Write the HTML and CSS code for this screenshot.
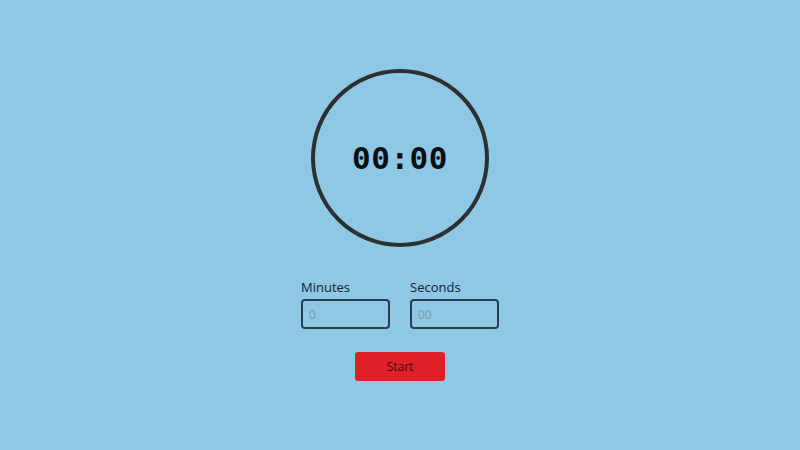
FILE: index.html
```html
<!DOCTYPE html>
<html lang="en">
<head>
<meta charset="utf-8">
<title>Timer</title>
<link rel="stylesheet" href="styles.css">
</head>
<body>
<main class="timer">
  <div class="dial">
    <span class="readout">00:00</span>
  </div>
  <div class="fields">
    <label class="field">
      <span class="field-label">Minutes</span>
      <input class="field-input" type="text" placeholder="0">
    </label>
    <label class="field">
      <span class="field-label">Seconds</span>
      <input class="field-input" type="text" placeholder="00">
    </label>
  </div>
  <button class="start" type="button">Start</button>
</main>
</body>
</html>
```
FILE: styles.css
```css
html, body {
  margin: 0;
  padding: 0;
  height: 100%;
}

body {
  background: #8ec8e5;
  font-family: "Open Sans", "Noto Sans", sans-serif;
  color: #10202e;
}

.timer {
  display: flex;
  flex-direction: column;
  align-items: center;
  padding-top: 69px;
}

.dial {
  width: 170px;
  height: 170px;
  border: 4px solid #2d2f31;
  border-radius: 50%;
  display: flex;
  align-items: center;
  justify-content: center;
}

.readout {
  font-family: "DejaVu Sans Mono", monospace;
  font-weight: bold;
  font-size: 31px;
  color: #0c0f12;
  letter-spacing: 0.5px;
}

.fields {
  display: flex;
  gap: 20px;
  margin-top: 31px;
}

.field {
  display: flex;
  flex-direction: column;
  gap: 3px;
}

.field-label {
  font-size: 13px;
  line-height: 18px;
  color: #10202e;
}

.field-input {
  box-sizing: border-box;
  width: 89px;
  height: 30px;
  margin: 0;
  padding: 0 6px;
  border: 2px solid #2a3d4f;
  border-radius: 4px;
  background: transparent;
  font-family: "Open Sans", sans-serif;
  font-size: 12px;
  color: #10202e;
  outline: none;
}

.field-input::placeholder {
  color: #7d98a8;
}

.start {
  margin-top: 23px;
  width: 90px;
  height: 29px;
  border: none;
  border-radius: 3px;
  background: #de2129;
  color: #3d0b0e;
  font-family: "Open Sans", sans-serif;
  font-size: 12px;
  cursor: pointer;
}
```
